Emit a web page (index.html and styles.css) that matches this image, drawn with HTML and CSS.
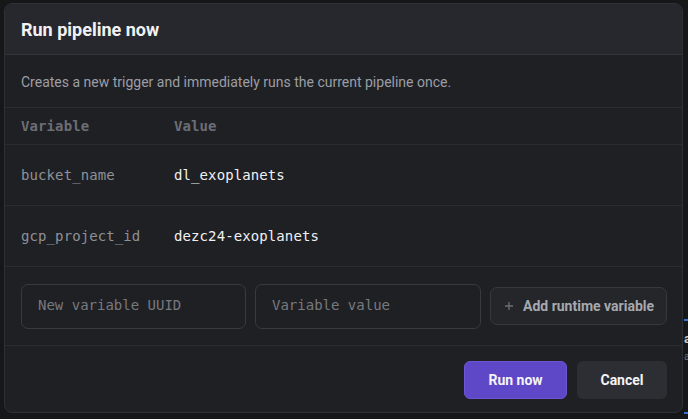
FILE: index.html
```html
<!DOCTYPE html>
<html>
<head>
<meta charset="utf-8">
<link rel="stylesheet" href="styles.css">
</head>
<body>
<div class="backdrop">
  <span class="bg-line bg-line-1"></span>
  <span class="bg-text bg-text-1">a</span>
  <span class="bg-text bg-text-2">a</span>
  <span class="bg-line bg-line-2"></span>
</div>
<div class="modal">
  <div class="modal-header">Run pipeline now</div>
  <div class="modal-desc">Creates a new trigger and immediately runs the current pipeline once.</div>
  <div class="vars">
    <div class="row row-head">
      <div class="cell-name">Variable</div>
      <div class="cell-value">Value</div>
    </div>
    <div class="row">
      <div class="cell-name">bucket_name</div>
      <div class="cell-value">dl_exoplanets</div>
    </div>
    <div class="row">
      <div class="cell-name">gcp_project_id</div>
      <div class="cell-value">dezc24-exoplanets</div>
    </div>
  </div>
  <div class="add-row">
    <input class="field field-uuid" placeholder="New variable UUID">
    <input class="field field-value" placeholder="Variable value">
    <button class="btn-add"><svg width="10" height="10" viewBox="0 0 10 10"><path d="M5 1v8M1 5h8" stroke="#6c6f76" stroke-width="1.3" fill="none"/></svg><span>Add runtime variable</span></button>
  </div>
  <div class="modal-footer">
    <button class="btn btn-primary">Run now</button>
    <button class="btn btn-secondary">Cancel</button>
  </div>
</div>
</body>
</html>
```

FILE: styles.css
```css
html, body {
  margin: 0;
  padding: 0;
  background: #161719;
  width: 688px;
  height: 419px;
  overflow: hidden;
  font-family: Roboto, "Liberation Sans", sans-serif;
}

.backdrop {
  position: absolute;
  inset: 0;
  background: #161719;
}

.bg-line {
  position: absolute;
  left: 684px;
  width: 4px;
  height: 2px;
  background: #3b6fd6;
}
.bg-line-1 { top: 319px; }
.bg-line-2 { top: 412px; }

.bg-text {
  position: absolute;
  left: 684px;
  color: #c8c9cc;
  font-size: 13px;
  font-weight: 700;
  line-height: 14px;
}
.bg-text-1 { top: 332px; }
.bg-text-2 { top: 350px; color: #6d6f75; font-weight: 400; font-size: 10px; }

.modal {
  position: absolute;
  left: 4px;
  top: 3px;
  width: 677px;
  height: 408px;
  display: flex;
  flex-direction: column;
  background: #1f2024;
  border: 1px solid #2f3035;
  border-radius: 8px;
  overflow: hidden;
}

.modal-header {
  flex: none;
  display: flex;
  align-items: center;
  padding-left: 16px;
  padding-top: 1px;
  background: #27282d;
  border-bottom: 1px solid #34353a;
  color: #f2f2f4;
  font-size: 18px;
  font-weight: 700;
  box-sizing: border-box;
  height: 51px;
}

.modal-desc {
  height: 53px;
  box-sizing: border-box;
  flex: none;
  display: flex;
  align-items: center;
  padding-left: 16px;
  padding-top: 1px;
  color: #9c9ea5;
  font-size: 14px;
  border-bottom: 1px solid #2b2c31;
}

.vars {
  font-family: "DejaVu Sans Mono", "Liberation Mono", monospace;
  font-size: 14px;
}

.row {
  display: flex;
  align-items: center;
  height: 61px;
  box-sizing: border-box;
  padding-left: 16px;
  border-bottom: 1px solid #2b2c31;
  color: #f0f0f2;
  letter-spacing: 0.1px;
}

.row-head {
  height: 37px;
  color: #6c6e75;
  font-weight: 700;
}

.cell-name {
  width: 153px;
  flex: none;
}
.row .cell-name { color: #8e9097; }
.row-head .cell-name { color: #6c6e75; }

.add-row {
  display: flex;
  align-items: center;
  gap: 9px;
  padding: 16px 15px 16px 16px;
  border-bottom: 1px solid #2b2c31;
  height: 79px;
  box-sizing: border-box;
}

.field {
  box-sizing: border-box;
  height: 45px;
  background: #1f2024;
  border: 1px solid #393a40;
  border-radius: 7px;
  padding: 0 0 2px 16px;
  font-family: "DejaVu Sans Mono", "Liberation Mono", monospace;
  font-size: 14px;
  color: #e8e8ea;
  outline: none;
}
.field::placeholder { color: #77797f; }
.field-uuid { width: 225px; }
.field-value { width: 226px; }

.btn-add {
  box-sizing: border-box;
  width: 177px;
  height: 38px;
  display: flex;
  align-items: center;
  gap: 9px;
  padding: 0 0 0 13px;
  background: #252629;
  border: 1px solid #37383d;
  border-radius: 7px;
  color: #a7a9b0;
  font-family: Roboto, "Liberation Sans", sans-serif;
  font-size: 14px;
  font-weight: 700;
  white-space: nowrap;
}

.modal-footer {
  flex: 1;
  display: flex;
  justify-content: flex-end;
  align-items: flex-start;
  gap: 10px;
  padding: 15px 15px 0 0;
}

.btn {
  box-sizing: border-box;
  height: 38px;
  border: none;
  border-radius: 6px;
  font-family: Roboto, "Liberation Sans", sans-serif;
  font-size: 14px;
  font-weight: 700;
  color: #f4f4f6;
}
.btn-primary {
  width: 103px;
  background: #5f48c8;
  border: 1px solid #6c56d6;
}
.btn-secondary {
  width: 90px;
  background: #2d2e33;
}
```
